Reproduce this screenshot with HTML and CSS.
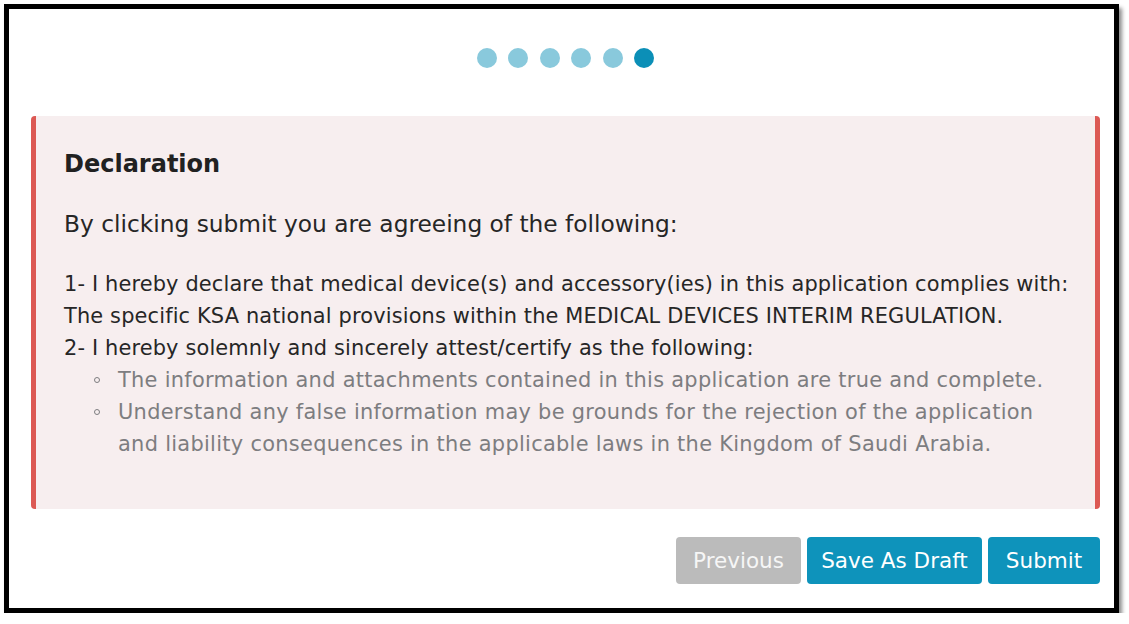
FILE: index.html
```html
<!DOCTYPE html>
<html lang="en">
<head>
<meta charset="utf-8">
<title>Declaration</title>
<link rel="stylesheet" href="styles.css">
</head>
<body>
<div class="frame">
  <div class="wrap">
    <div class="steps">
      <span class="dot"></span>
      <span class="dot"></span>
      <span class="dot"></span>
      <span class="dot"></span>
      <span class="dot"></span>
      <span class="dot active"></span>
    </div>
    <div class="panel">
      <h2 class="title">Declaration</h2>
      <p class="intro">By clicking submit you are agreeing of the following:</p>
      <div class="body">
        <p class="line">1- I hereby declare that medical device(s) and accessory(ies) in this application complies with:</p>
        <p class="line">The specific KSA national provisions within the MEDICAL DEVICES INTERIM REGULATION.</p>
        <p class="line">2- I hereby solemnly and sincerely attest/certify as the following:</p>
        <ul class="list">
          <li>The information and attachments contained in this application are true and complete.</li>
          <li>Understand any false information may be grounds for the rejection of the application and liability consequences in the applicable laws in the Kingdom of Saudi Arabia.</li>
        </ul>
      </div>
    </div>
    <div class="actions">
      <button class="btn btn-grey btn-prev">Previous</button>
      <button class="btn btn-blue btn-draft">Save As Draft</button>
      <button class="btn btn-blue btn-submit">Submit</button>
    </div>
  </div>
</div>
</body>
</html>
```
FILE: styles.css
```css
html, body {
  margin: 0;
  padding: 0;
  background: #ffffff;
}
body {
  font-family: "DejaVu Sans", "Open Sans", sans-serif;
}
.frame {
  box-sizing: border-box;
  margin: 4px 0 0 4px;
  width: 1115px;
  height: 609px;
  border: 5px solid #000000;
  background: #ffffff;
  box-shadow: 3px 4px 4px rgba(0, 0, 0, 0.45);
}
.wrap {
  width: 1069px;
  margin-left: 22px;
  padding-top: 39px;
}
.steps {
  display: flex;
  justify-content: center;
  gap: 11.4px;
  height: 20px;
}
.dot {
  width: 20px;
  height: 20px;
  border-radius: 50%;
  background: #89c9dc;
}
.dot.active {
  background: #0b8fb7;
}
.panel {
  box-sizing: border-box;
  margin-top: 48px;
  height: 393px;
  background: #f7eeef;
  border-left: 5px solid #dc5954;
  border-right: 5px solid #dc5954;
  border-radius: 4px;
  padding: 34px 18px 0 28px;
}
.title {
  margin: 0 0 28px;
  font-size: 24px;
  line-height: 28.8px;
  font-weight: bold;
  color: #212121;
}
.intro {
  margin: 0 0 27px;
  font-size: 23.3px;
  line-height: 34.5px;
  color: #262626;
}
.body {
  font-size: 20.9px;
  letter-spacing: 0.15px;
  line-height: 32px;
  color: #262626;
}
.line {
  margin: 0;
  white-space: nowrap;
}
.list {
  margin: 0;
  padding: 0 24px 0 54px;
  list-style: none;
  color: #7d7d80;
  letter-spacing: 0.3px;
}
.list li {
  position: relative;
}
.list li::before {
  content: "";
  position: absolute;
  left: -24px;
  top: 13px;
  width: 4px;
  height: 4px;
  border: 1.3px solid #7d7d80;
  border-radius: 50%;
}
.actions {
  display: flex;
  justify-content: flex-end;
  gap: 6px;
  margin-top: 28px;
}
.btn {
  box-sizing: border-box;
  flex: none;
  height: 47px;
  border: none;
  border-radius: 4px;
  font-family: "DejaVu Sans", "Open Sans", sans-serif;
  font-size: 21.5px;
  color: #ffffff;
  padding: 0;
  text-align: center;
  white-space: nowrap;
}
.btn-grey {
  background: #bbbbbb;
  color: #f6f6f6;
}
.btn-blue {
  background: #0e93bb;
}
.btn-prev {
  width: 125px;
}
.btn-draft {
  width: 175px;
}
.btn-submit {
  width: 112px;
}
```
